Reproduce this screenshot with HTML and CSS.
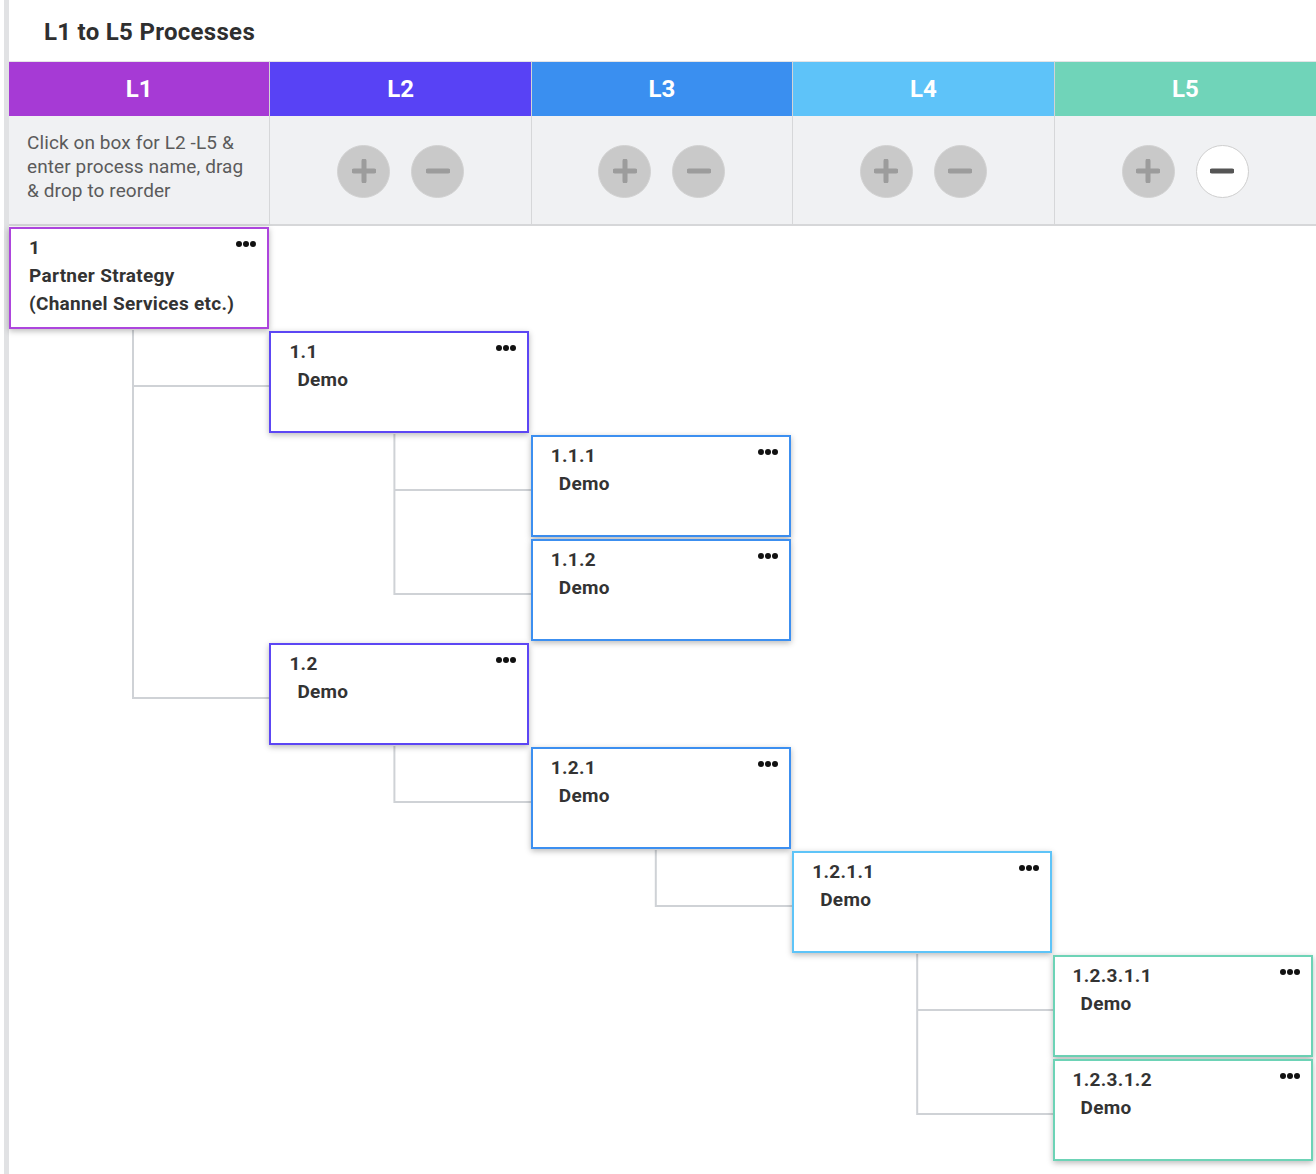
FILE: index.html
```html
<!DOCTYPE html>
<html lang="en">
<head>
<meta charset="utf-8">
<title>L1 to L5 Processes</title>
<link rel="stylesheet" href="styles.css">
</head>
<body>
<div class="page">
  <h1 class="title">L1 to L5 Processes</h1>

  <div class="levels">
    <div class="head lv1">L1</div>
    <div class="head lv2">L2</div>
    <div class="head lv3">L3</div>
    <div class="head lv4">L4</div>
    <div class="head lv5">L5</div>

    <div class="ctrl note">Click on box for L2 -L5 &amp; enter process name, drag &amp; drop to reorder</div>
    <div class="ctrl">
      <button class="btn add" type="button"><svg viewBox="0 0 24 24" width="24" height="24"><path d="M12 2v20M2 12h20" /></svg></button>
      <button class="btn sub" type="button"><svg viewBox="0 0 24 24" width="24" height="24"><path d="M2 12h20" /></svg></button>
    </div>
    <div class="ctrl">
      <button class="btn add" type="button"><svg viewBox="0 0 24 24" width="24" height="24"><path d="M12 2v20M2 12h20" /></svg></button>
      <button class="btn sub" type="button"><svg viewBox="0 0 24 24" width="24" height="24"><path d="M2 12h20" /></svg></button>
    </div>
    <div class="ctrl">
      <button class="btn add" type="button"><svg viewBox="0 0 24 24" width="24" height="24"><path d="M12 2v20M2 12h20" /></svg></button>
      <button class="btn sub" type="button"><svg viewBox="0 0 24 24" width="24" height="24"><path d="M2 12h20" /></svg></button>
    </div>
    <div class="ctrl">
      <button class="btn add" type="button"><svg viewBox="0 0 24 24" width="24" height="24"><path d="M12 2v20M2 12h20" /></svg></button>
      <button class="btn sub active" type="button"><svg viewBox="0 0 24 24" width="24" height="24"><path d="M2 12h20" /></svg></button>
    </div>
  </div>

  <div class="tree">
    <svg class="links" viewBox="0 0 1307 936" width="1307" height="936">
      <path d="M124 104V473M124 160H262M124 472H262" />
      <path d="M385.4 208V369M385.4 264H523M385.4 368H523" />
      <path d="M385.4 520V577M385.4 576H523" />
      <path d="M646.8 624V681M646.8 680H784" />
      <path d="M908.2 728V889M908.2 784H1046M908.2 888H1046" />
    </svg>

    <div class="card lv1 r1 c1">
      <div class="num">1</div>
      <div class="name">Partner Strategy<br>(Channel Services etc.)</div>
      <span class="more"><svg viewBox="0 0 20 6" width="20" height="6"><circle cx="3" cy="3" r="3"/><circle cx="10" cy="3" r="3"/><circle cx="17" cy="3" r="3"/></svg></span>
    </div>

    <div class="card lv2 r2 c2">
      <div class="num">1.1</div>
      <div class="name indent">Demo</div>
      <span class="more"><svg viewBox="0 0 20 6" width="20" height="6"><circle cx="3" cy="3" r="3"/><circle cx="10" cy="3" r="3"/><circle cx="17" cy="3" r="3"/></svg></span>
    </div>

    <div class="card lv3 r3 c3">
      <div class="num">1.1.1</div>
      <div class="name indent">Demo</div>
      <span class="more"><svg viewBox="0 0 20 6" width="20" height="6"><circle cx="3" cy="3" r="3"/><circle cx="10" cy="3" r="3"/><circle cx="17" cy="3" r="3"/></svg></span>
    </div>

    <div class="card lv3 r4 c3">
      <div class="num">1.1.2</div>
      <div class="name indent">Demo</div>
      <span class="more"><svg viewBox="0 0 20 6" width="20" height="6"><circle cx="3" cy="3" r="3"/><circle cx="10" cy="3" r="3"/><circle cx="17" cy="3" r="3"/></svg></span>
    </div>

    <div class="card lv2 r5 c2">
      <div class="num">1.2</div>
      <div class="name indent">Demo</div>
      <span class="more"><svg viewBox="0 0 20 6" width="20" height="6"><circle cx="3" cy="3" r="3"/><circle cx="10" cy="3" r="3"/><circle cx="17" cy="3" r="3"/></svg></span>
    </div>

    <div class="card lv3 r6 c3">
      <div class="num">1.2.1</div>
      <div class="name indent">Demo</div>
      <span class="more"><svg viewBox="0 0 20 6" width="20" height="6"><circle cx="3" cy="3" r="3"/><circle cx="10" cy="3" r="3"/><circle cx="17" cy="3" r="3"/></svg></span>
    </div>

    <div class="card lv4 r7 c4">
      <div class="num">1.2.1.1</div>
      <div class="name indent">Demo</div>
      <span class="more"><svg viewBox="0 0 20 6" width="20" height="6"><circle cx="3" cy="3" r="3"/><circle cx="10" cy="3" r="3"/><circle cx="17" cy="3" r="3"/></svg></span>
    </div>

    <div class="card lv5 r8 c5">
      <div class="num">1.2.3.1.1</div>
      <div class="name indent">Demo</div>
      <span class="more"><svg viewBox="0 0 20 6" width="20" height="6"><circle cx="3" cy="3" r="3"/><circle cx="10" cy="3" r="3"/><circle cx="17" cy="3" r="3"/></svg></span>
    </div>

    <div class="card lv5 r9 c5">
      <div class="num">1.2.3.1.2</div>
      <div class="name indent">Demo</div>
      <span class="more"><svg viewBox="0 0 20 6" width="20" height="6"><circle cx="3" cy="3" r="3"/><circle cx="10" cy="3" r="3"/><circle cx="17" cy="3" r="3"/></svg></span>
    </div>
  </div>
</div>
</body>
</html>
```

FILE: styles.css
```css
* { box-sizing: border-box; }

html, body {
  margin: 0;
  padding: 0;
  background: #ffffff;
}

body {
  font-family: Roboto, "Liberation Sans", Arial, sans-serif;
  color: #333333;
}

.page {
  margin-left: 4px;
  border-left: 5px solid #e1e2e4;
  width: 1312px;
  min-height: 1174px;
}

.title {
  margin: 0;
  height: 61px;
  padding: 17px 0 0 35px;
  font-size: 24px;
  line-height: 30px;
  font-weight: 700;
  letter-spacing: 0.3px;
  color: #2f2f2f;
}

/* Level header + controls */
.levels {
  display: grid;
  grid-template-columns: repeat(5, 1fr);
}

.head {
  height: 55px;
  display: flex;
  align-items: center;
  justify-content: center;
  color: #ffffff;
  font-size: 24px;
  font-weight: 700;
  border-right: 1px solid #d3d3d6;
  border-top: 1px solid #e4e4e6;
}
.head.lv5 { border-right: none; }

.head.lv1 { background: #a63ad5; }
.head.lv2 { background: #5842f5; }
.head.lv3 { background: #3a8ff0; }
.head.lv4 { background: #5ec3f9; }
.head.lv5 { background: #70d4b9; }

.ctrl {
  height: 110px;
  background: #f0f1f3;
  border-right: 1px solid #d6d7d9;
  border-bottom: 2px solid #d6d7d9;
  display: flex;
  align-items: center;
  justify-content: center;
  gap: 21px;
  padding-top: 2px;
}
.ctrl:last-child { border-right: none; }

.ctrl.note {
  justify-content: flex-start;
  padding: 0 16px 6px 18px;
  font-size: 19px;
  line-height: 24px;
  letter-spacing: 0.1px;
  color: #5b5b5b;
}

.btn {
  width: 53px;
  height: 53px;
  border-radius: 50%;
  background: #c9c9c9;
  border: 1px solid #d2d2d2;
  padding: 0;
  display: flex;
  align-items: center;
  justify-content: center;
  cursor: pointer;
}
.btn svg path {
  stroke: #9c9c9c;
  stroke-width: 5;
  stroke-linecap: round;
  fill: none;
}
.btn.active {
  background: #ffffff;
  border: 1.5px solid #cfcfcf;
}
.btn.active svg path { stroke: #555555; }

/* Tree */
.tree {
  position: relative;
  display: grid;
  grid-template-columns: repeat(5, 1fr);
  grid-template-rows: repeat(9, 104px);
}

.links {
  position: absolute;
  left: 0;
  top: 0;
  z-index: 0;
}
.links path {
  stroke: #cfd2d6;
  stroke-width: 2;
  fill: none;
}

.card {
  position: relative;
  z-index: 1;
  width: 260px;
  height: 102px;
  margin-top: 1px;
  background: #ffffff;
  border: 2px solid;
  box-shadow: 0 2px 6px rgba(0, 0, 0, 0.28);
  padding: 5px 14px 0 18px;
  font-size: 19px;
  line-height: 28px;
  font-weight: 700;
  letter-spacing: 0.3px;
  color: #333333;
}

.card.lv1 { border-color: #ad45dd; }
.card.lv2 { border-color: #5c46f4; }
.card.lv3 { border-color: #3c8ff0; }
.card.lv4 { border-color: #5ec4f8; }
.card.lv5 { border-color: #6dd3b6; }

.r1 { grid-row: 1; }
.r2 { grid-row: 2; }
.r3 { grid-row: 3; }
.r4 { grid-row: 4; }
.r5 { grid-row: 5; }
.r6 { grid-row: 6; }
.r7 { grid-row: 7; }
.r8 { grid-row: 8; }
.r9 { grid-row: 9; }

.c1 { grid-column: 1; }
.c2 { grid-column: 2; margin-left: -1px; }
.c3 { grid-column: 3; margin-left: -1px; }
.c4 { grid-column: 4; margin-left: -1px; }
.c5 { grid-column: 5; margin-left: -2px; }

.name.indent { padding-left: 8px; }

.more {
  position: absolute;
  top: 12px;
  right: 11px;
  line-height: 0;
}
.more svg circle { fill: #111111; }
```
